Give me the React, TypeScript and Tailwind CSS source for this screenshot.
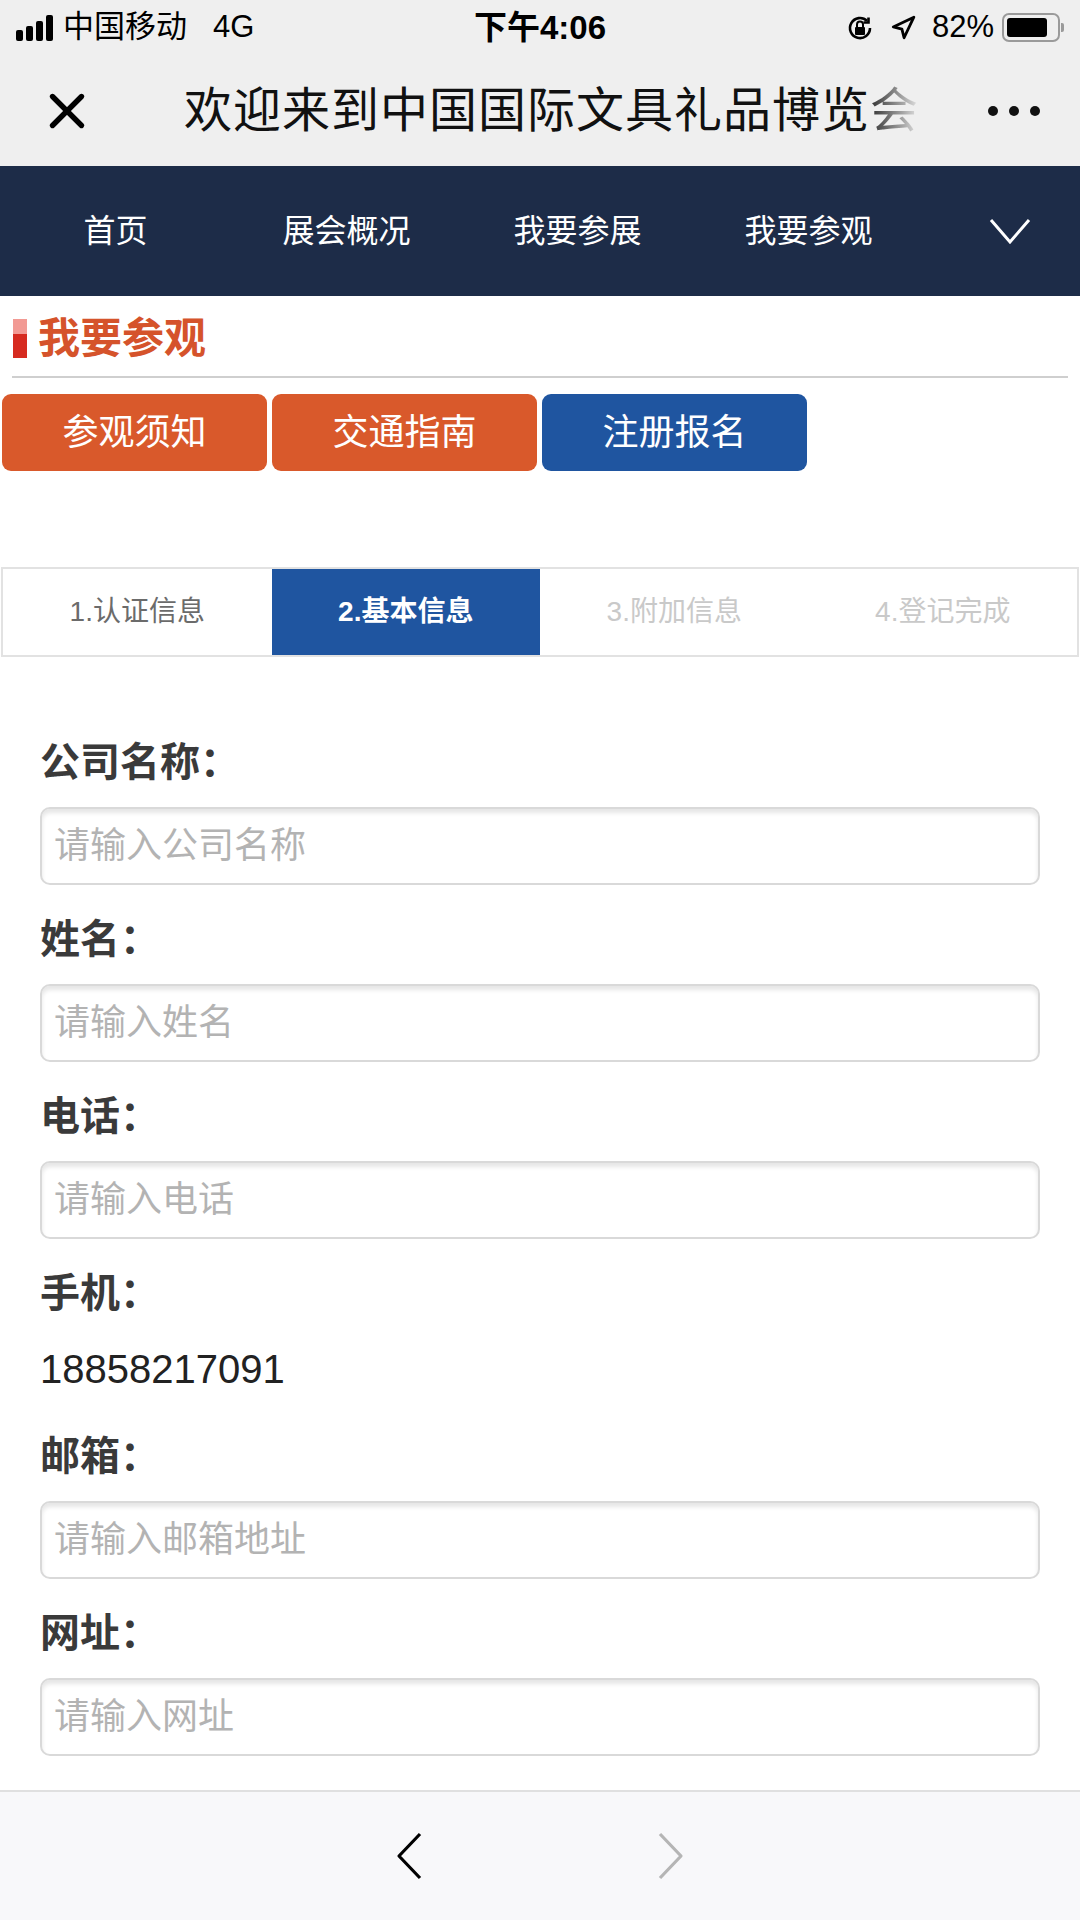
import { Navigation, X } from 'lucide-react';

const FONT = "font-['Liberation_Sans','Noto_Sans_CJK_SC',sans-serif]";

const NAV_ITEMS = ['首页', '展会概况', '我要参展', '我要参观'];
const STEPS = [
  { label: '1.认证信息', state: 'done' },
  { label: '2.基本信息', state: 'active' },
  { label: '3.附加信息', state: 'todo' },
  { label: '4.登记完成', state: 'todo' },
];

// 状态栏
function StatusBar() {
  return (
    <div className="h-[55px] flex items-center justify-between px-[16px] text-[31px] text-black">
      <div className="flex items-center">
        <div className="flex items-end gap-[3px] h-[26px] mr-[10px]">
          <span className="w-[7px] h-[11px] rounded-[2px] bg-black" />
          <span className="w-[7px] h-[15px] rounded-[2px] bg-black" />
          <span className="w-[7px] h-[20px] rounded-[2px] bg-black" />
          <span className="w-[7px] h-[26px] rounded-[2px] bg-black" />
        </div>
        <span>中国移动</span>
        <span className="ml-[26px]">4G</span>
      </div>
      <div className="absolute left-0 right-0 text-center text-[33px] font-semibold pointer-events-none">下午4:06</div>
      <div className="flex items-center">
        <svg width="28" height="28" viewBox="0 0 28 28" className="mr-[16px]">
          <path d="M24 14a10 10 0 1 1-3-7.1" fill="none" stroke="black" strokeWidth="2.6" />
          <path d="M22.5 3.5v5h-5" fill="none" stroke="black" strokeWidth="2.6" />
          <rect x="9" y="13" width="10" height="8" rx="1" fill="black" />
          <path d="M11 13v-2.5a3 3 0 0 1 6 0V13" fill="none" stroke="black" strokeWidth="2" />
        </svg>
        <Navigation className="w-[26px] h-[26px] mr-[16px]" strokeWidth={2.6} />
        <span>82%</span>
        <div className="ml-[8px] flex items-center">
          <div className="w-[58px] h-[29px] rounded-[7px] border-[2px] border-[#9a9a9a] p-[3px]">
            <div className="w-[84%] h-full rounded-[3px] bg-black" />
          </div>
          <div className="w-[3px] h-[9px] rounded-r-[2px] bg-[#9a9a9a] ml-[1px]" />
        </div>
      </div>
    </div>
  );
}

function FormField({ label, placeholder }: { label: string; placeholder: string }) {
  return (
    <div className="mb-[26px]">
      <div className="h-[56px] leading-[56px] text-[40px] font-bold text-[#3a3a3a]">{label}：</div>
      <input
        placeholder={placeholder}
        className="mt-[17px] w-full h-[78px] rounded-[10px] border-[2px] border-[#d9d9d9] bg-white pl-[12px] text-[36px] text-[#333] placeholder:text-[#b3b3b3] shadow-[inset_0_4px_4px_rgba(0,0,0,0.10)] outline-none"
      />
    </div>
  );
}

export default function App() {
  return (
    <div className={`${FONT} w-[1080px] h-[1920px] flex flex-col bg-white overflow-hidden`}>
      {/* 顶部系统栏 + 标题栏 */}
      <div className="bg-[#efefef] relative">
        <StatusBar />
        <div className="h-[111px] flex items-center">
          <X className="ml-[38px] w-[58px] h-[58px]" strokeWidth={2.2} />
          <div className="ml-[88px] text-[48px] text-[#111] whitespace-nowrap tracking-[1px]">
            欢迎来到中国国际文具礼品博览
            <span className="bg-linear-to-r from-[#333] to-[#e5e5e5] bg-clip-text text-transparent">会</span>
          </div>
          <div className="ml-auto mr-[40px] flex gap-[11px]">
            <span className="w-[10px] h-[10px] rounded-full bg-[#111]" />
            <span className="w-[10px] h-[10px] rounded-full bg-[#111]" />
            <span className="w-[10px] h-[10px] rounded-full bg-[#111]" />
          </div>
        </div>
      </div>

      {/* 导航 */}
      <div className="h-[130px] bg-[#1d2c48] flex items-center text-white text-[32px]">
        {NAV_ITEMS.map(item => (
          <div key={item} className="w-[231px] text-center">{item}</div>
        ))}
        <div className="flex-1 flex justify-center pl-[16px]">
          <svg width="44" height="30" viewBox="0 0 44 30">
            <polyline points="3,4 22,26 41,4" fill="none" stroke="white" strokeWidth="3" />
          </svg>
        </div>
      </div>

      {/* 栏目标题 */}
      <div className="h-[80px] flex items-center pt-[4px]">
        <div className="ml-[13px] w-[14px] h-[39px] flex flex-col">
          <div className="h-[15px] bg-[#f29a94]" />
          <div className="flex-1 bg-[#d62b20]" />
        </div>
        <span className="ml-[11px] text-[42px] font-bold text-[#d5532b]">我要参观</span>
      </div>
      <div className="mx-[12px] h-[2px] bg-[#cfcfcf]" />

      {/* 按钮 */}
      <div className="mt-[16px] pl-[2px] flex gap-[5px]">
        <button className="w-[265px] h-[77px] rounded-[9px] bg-[#d9592b] text-white text-[36px]">参观须知</button>
        <button className="w-[265px] h-[77px] rounded-[9px] bg-[#d9592b] text-white text-[36px]">交通指南</button>
        <button className="w-[265px] h-[77px] rounded-[9px] bg-[#1f55a0] text-white text-[36px]">注册报名</button>
      </div>

      {/* 步骤 */}
      <div className="mt-[96px] mx-[1px] h-[90px] border-[2px] border-[#e2e2e2] grid grid-cols-4 text-[28px]">
        {STEPS.map(step => (
          <div
            key={step.label}
            className={
              step.state === 'active'
                ? 'bg-[#1f55a0] text-white font-bold flex items-center justify-center'
                : step.state === 'done'
                  ? 'text-[#6b6b6b] flex items-center justify-center'
                  : 'text-[#c9c9c9] flex items-center justify-center'
            }
          >
            {step.label}
          </div>
        ))}
      </div>

      {/* 表单 */}
      <div className="mt-[77px] px-[40px]">
        <FormField label="公司名称" placeholder="请输入公司名称" />
        <FormField label="姓名" placeholder="请输入姓名" />
        <FormField label="电话" placeholder="请输入电话" />
        <div className="mb-[31px]">
          <div className="h-[56px] leading-[56px] text-[40px] font-bold text-[#3a3a3a]">手机：</div>
          <div className="mt-[20px] h-[56px] leading-[56px] text-[40px] text-[#222]">18858217091</div>
        </div>
        <FormField label="邮箱" placeholder="请输入邮箱地址" />
        <FormField label="网址" placeholder="请输入网址" />
      </div>

      {/* 底部工具栏 */}
      <div className="mt-auto h-[130px] bg-[#f8f8fa] border-t-[2px] border-[#e0e0e0] flex items-center justify-center gap-[234px]">
        <svg width="28" height="48" viewBox="0 0 28 48">
          <polyline points="25,2 4,24 25,46" fill="none" stroke="black" strokeWidth="3.2" strokeLinejoin="round" />
        </svg>
        <svg width="28" height="48" viewBox="0 0 28 48">
          <polyline points="3,2 24,24 3,46" fill="none" stroke="#b5b5b5" strokeWidth="3.2" strokeLinejoin="round" />
        </svg>
      </div>
    </div>
  );
}
